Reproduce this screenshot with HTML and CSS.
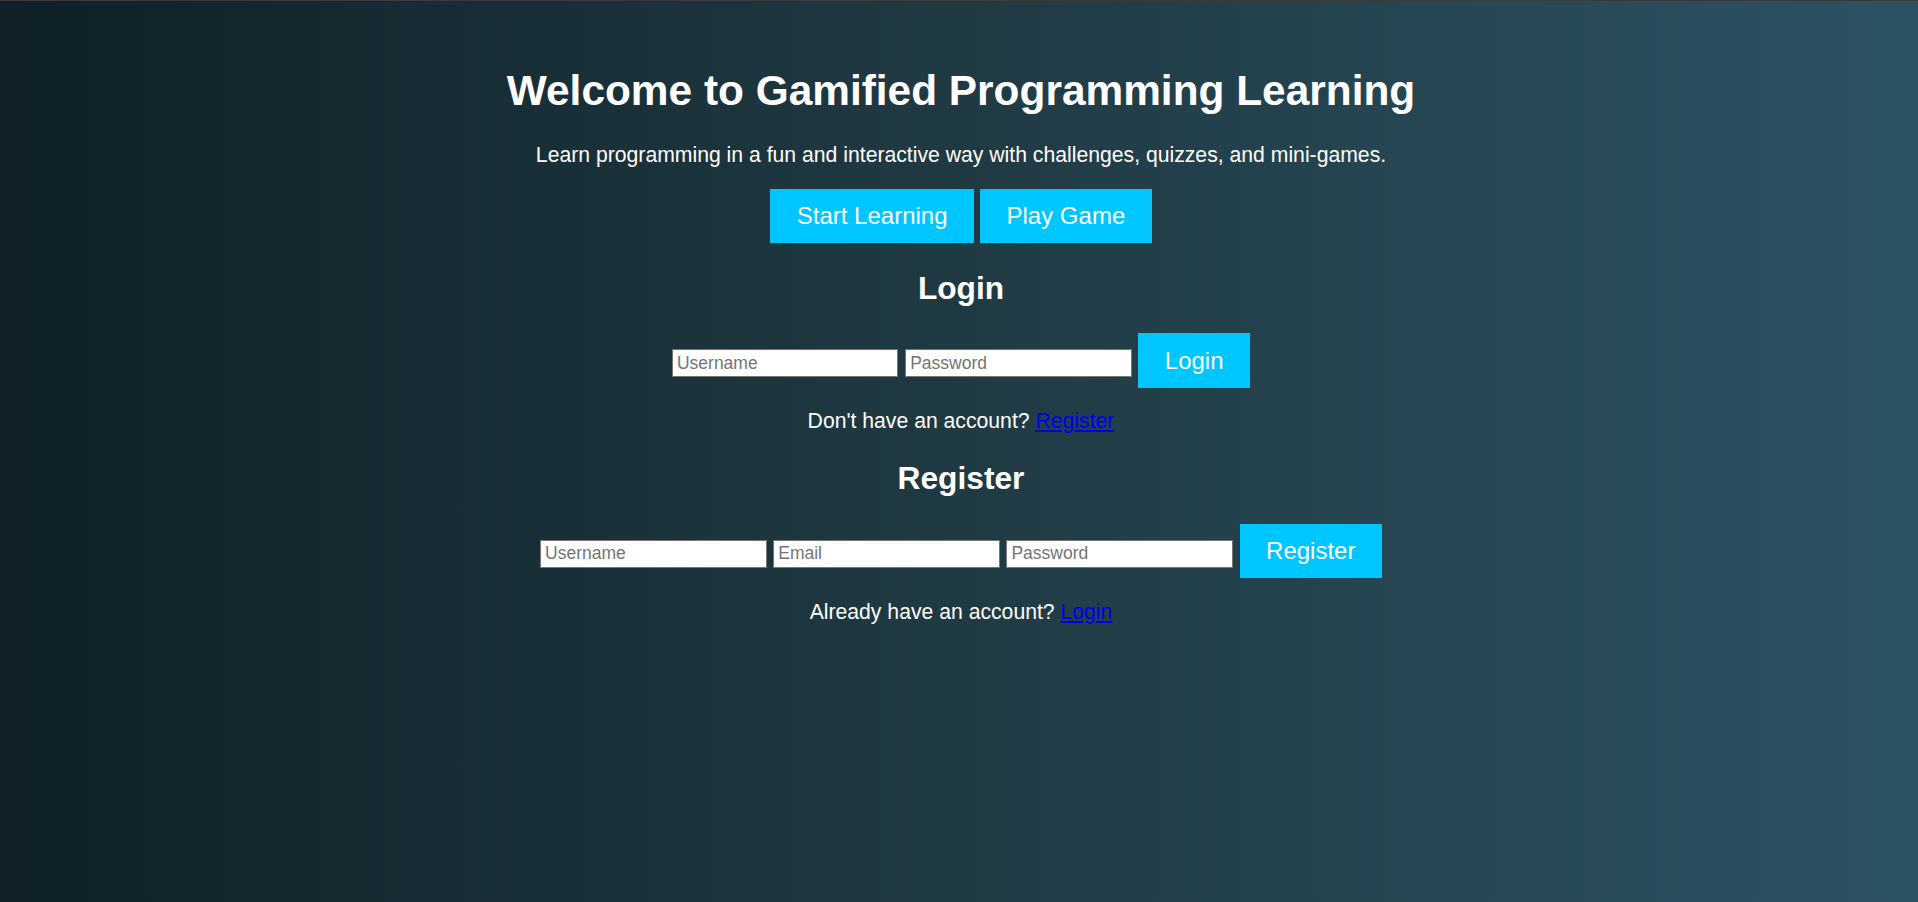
FILE: index.html
```html
<!DOCTYPE html>
<html lang="en">
<head>
<meta charset="utf-8">
<title>Gamified Programming Learning</title>
<link rel="stylesheet" href="styles.css">
</head>
<body>
  <main class="page">
    <header class="hero">
      <h1 class="hero-title">Welcome to Gamified Programming Learning</h1>
      <p class="hero-text">Learn programming in a fun and interactive way with challenges, quizzes, and mini-games.</p>
      <div class="actions">
        <button class="btn" type="button">Start Learning</button>
        <button class="btn" type="button">Play Game</button>
      </div>
    </header>

    <section class="auth">
      <h2 class="auth-title">Login</h2>
      <form class="auth-form">
        <input class="field" type="text" placeholder="Username">
        <input class="field" type="password" placeholder="Password">
        <button class="btn" type="button">Login</button>
      </form>
      <p class="switch">Don't have an account? <a class="link" href="#register">Register</a></p>
    </section>

    <section class="auth" id="register">
      <h2 class="auth-title">Register</h2>
      <form class="auth-form">
        <input class="field" type="text" placeholder="Username">
        <input class="field" type="email" placeholder="Email">
        <input class="field" type="password" placeholder="Password">
        <button class="btn" type="button">Register</button>
      </form>
      <p class="switch">Already have an account? <a class="link" href="#">Login</a></p>
    </section>
  </main>
</body>
</html>
```

FILE: styles.css
```css
html {
  background: #0f2027;
}

body {
  margin: 0;
  min-height: 901px;
  border-top: 1px solid #3b3b3b;
  background: linear-gradient(to right, #0f2027, #203a43, #2c5364);
  color: #ffffff;
  font-family: "Liberation Sans", Arial, sans-serif;
  font-size: 21.33px;
}

.page {
  padding: 36px 10px 0 14px;
  text-align: center;
}

.hero-title {
  margin: 28.6px 0;
  font-size: 42.4px;
  line-height: 49px;
  font-weight: bold;
}

.hero-text {
  margin: 21.33px 0;
  font-size: 21.2px;
  line-height: 24.5px;
}

.actions {
  display: flex;
  justify-content: center;
  gap: 6px;
}

.btn {
  padding: 13.33px 26.5px;
  border: none;
  border-radius: 0;
  background: #00c6ff;
  color: #ffffff;
  font-family: "Liberation Sans", Arial, sans-serif;
  font-size: 24px;
  line-height: 27.8px;
  cursor: pointer;
}

.auth-title {
  margin: 26.6px 0;
  font-size: 31.7px;
  line-height: 36.8px;
  font-weight: bold;
}

.auth-form {
  display: flex;
  justify-content: center;
  align-items: baseline;
  gap: 6.7px;
}

.field {
  box-sizing: border-box;
  width: 226.5px;
  height: 28px;
  margin: 0;
  padding: 0 4px;
  border: 1px solid #767676;
  border-radius: 0;
  background: #ffffff;
  color: #000000;
  font-family: "Liberation Sans", Arial, sans-serif;
  font-size: 17.5px;
}

.field::placeholder {
  color: #757575;
}

.switch {
  margin: 21.33px 0;
  font-size: 21.2px;
  line-height: 24.5px;
}

.link {
  color: #0000ee;
  text-decoration: underline;
}
```
